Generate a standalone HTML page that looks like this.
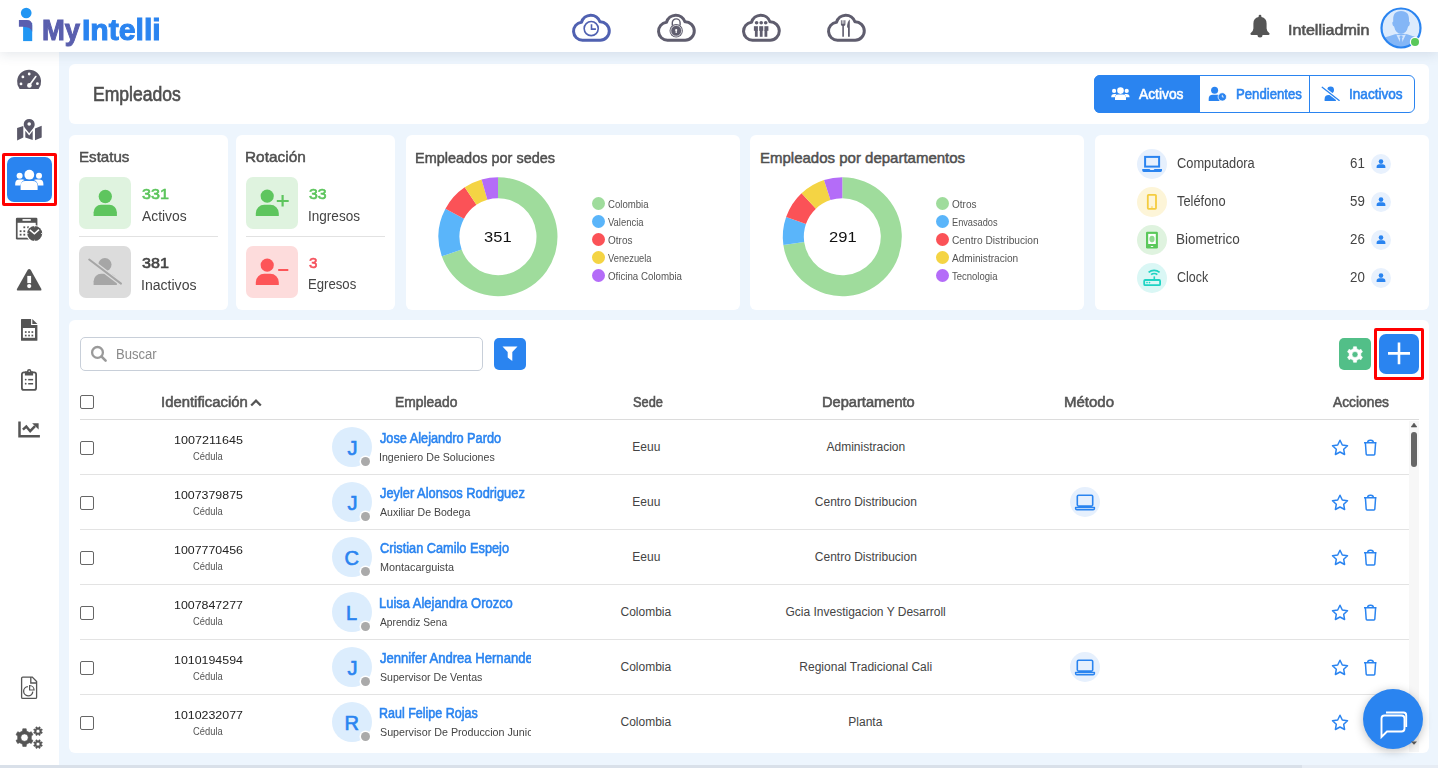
<!DOCTYPE html><html><head><meta charset="utf-8"><style>
html,body{margin:0;padding:0}
body{width:1438px;height:768px;overflow:hidden;position:relative;background:#edf5fd;font-family:"Liberation Sans", sans-serif}
.t{position:absolute;white-space:nowrap;transform-origin:0 0}
svg{display:block}
</style></head><body><div style="position:absolute;left:0px;top:0px;width:1438px;height:52px;background:#fff;box-shadow:0 2px 12px rgba(40,60,90,0.13);z-index:5"></div>
<div style="position:absolute;left:0px;top:52px;width:59px;height:716px;background:#fff;z-index:2"></div>
<div style="position:absolute;left:0px;top:765px;width:1302px;height:3px;background:#d9e0e9;z-index:6"></div>
<div style="position:absolute;left:1302px;top:765px;width:136px;height:3px;background:#e6ecf4;z-index:6"></div>
<div style="position:absolute;left:69px;top:64px;width:1360px;height:60px;background:#fff;border-radius:6px;"></div>
<div style="position:absolute;left:69px;top:135px;width:159px;height:175px;background:#fff;border-radius:6px;"></div>
<div style="position:absolute;left:236px;top:135px;width:159px;height:175px;background:#fff;border-radius:6px;"></div>
<div style="position:absolute;left:406px;top:135px;width:334px;height:175px;background:#fff;border-radius:6px;"></div>
<div style="position:absolute;left:750px;top:135px;width:334px;height:175px;background:#fff;border-radius:6px;"></div>
<div style="position:absolute;left:1095px;top:135px;width:334px;height:175px;background:#fff;border-radius:6px;"></div>
<div style="position:absolute;left:69px;top:320px;width:1360px;height:433px;background:#fff;border-radius:6px;"></div>
<div class="t" style="left: 92.52px; top: 84.07px; font-size: 20px; line-height: 20px; font-weight: 400; color: rgb(79, 79, 79); -webkit-text-stroke: 0.64px rgb(79, 79, 79); transform: scaleX(0.8773);">Empleados</div>
<div style="position:absolute;left:1094px;top:75px;width:321px;height:38px;box-sizing:border-box;border:1px solid #2a84f0;border-radius:6px;overflow:hidden"></div>
<div style="position:absolute;left:1094px;top:75px;width:106px;height:38px;background:#2a84f0;border-radius:6px 0 0 6px"></div>
<div style="position:absolute;left:1309px;top:75px;width:1px;height:38px;background:#2a84f0"></div>
<div class="t" style="left: 1139px; top: 85.8px; font-size: 15px; line-height: 15px; font-weight: 400; color: rgb(255, 255, 255); -webkit-text-stroke: 0.6px rgb(255, 255, 255); transform: scaleX(0.9196);">Activos</div>
<div class="t" style="left: 1235.62px; top: 85.8px; font-size: 15px; line-height: 15px; font-weight: 400; color: rgb(42, 132, 240); -webkit-text-stroke: 0.6px rgb(42, 132, 240); transform: scaleX(0.8769);">Pendientes</div>
<div class="t" style="left: 1348.79px; top: 85.8px; font-size: 15px; line-height: 15px; font-weight: 400; color: rgb(42, 132, 240); -webkit-text-stroke: 0.6px rgb(42, 132, 240); transform: scaleX(0.9065);">Inactivos</div>
<div class="t" style="left: 1287.83px; top: 22.4px; font-size: 15px; line-height: 15px; font-weight: 400; color: rgb(85, 85, 85); -webkit-text-stroke: 0.6px rgb(85, 85, 85); z-index: 7; transform: scaleX(1.0721);">Intelliadmin</div>
<div class="t" style="left: 78.59px; top: 149.2px; font-size: 15px; line-height: 15px; font-weight: 400; color: rgb(79, 79, 79); -webkit-text-stroke: 0.48px rgb(79, 79, 79); transform: scaleX(1.0077);">Estatus</div>
<div style="position:absolute;left:79px;top:177px;width:52px;height:52px;background:#dff3df;border-radius:7px"></div>
<div style="position:absolute;left:79px;top:246px;width:52px;height:52px;background:#dcdcdc;border-radius:7px"></div>
<div style="position:absolute;left:79px;top:236px;width:139px;height:1px;background:#e2e2e2"></div>
<div class="t" style="left: 141.7px; top: 185.9px; font-size: 15px; line-height: 15px; font-weight: 400; color: rgb(91, 196, 91); -webkit-text-stroke: 0.6px rgb(91, 196, 91); transform: scaleX(1.0735);">331</div>
<div class="t" style="left: 141.7px; top: 208.95px; font-size: 14px; line-height: 14px; font-weight: 400; color: rgb(68, 68, 68); transform: scaleX(0.9906);">Activos</div>
<div class="t" style="left: 141.7px; top: 255px; font-size: 15px; line-height: 15px; font-weight: 400; color: rgb(68, 68, 68); -webkit-text-stroke: 0.6px rgb(68, 68, 68); transform: scaleX(1.0735);">381</div>
<div class="t" style="left: 140.7px; top: 277.85px; font-size: 14px; line-height: 14px; font-weight: 400; color: rgb(68, 68, 68); transform: scaleX(1.0046);">Inactivos</div>
<div class="t" style="left: 245.47px; top: 149.2px; font-size: 15px; line-height: 15px; font-weight: 400; color: rgb(79, 79, 79); -webkit-text-stroke: 0.48px rgb(79, 79, 79); transform: scaleX(1.0266);">Rotación</div>
<div style="position:absolute;left:246px;top:177px;width:52px;height:52px;background:#dff3df;border-radius:7px"></div>
<div style="position:absolute;left:246px;top:246px;width:52px;height:52px;background:#fddcdc;border-radius:7px"></div>
<div style="position:absolute;left:246px;top:236px;width:139px;height:1px;background:#e2e2e2"></div>
<div class="t" style="left: 308.9px; top: 186.1px; font-size: 15px; line-height: 15px; font-weight: 400; color: rgb(91, 196, 91); -webkit-text-stroke: 0.6px rgb(91, 196, 91); transform: scaleX(1.0586);">33</div>
<div class="t" style="left: 307.93px; top: 208.75px; font-size: 14px; line-height: 14px; font-weight: 400; color: rgb(68, 68, 68); transform: scaleX(0.9678);">Ingresos</div>
<div class="t" style="left: 308.9px; top: 255.1px; font-size: 15px; line-height: 15px; font-weight: 400; color: rgb(245, 81, 92); -webkit-text-stroke: 0.6px rgb(245, 81, 92); transform: scaleX(1.0125);">3</div>
<div class="t" style="left: 307.96px; top: 277.45px; font-size: 14px; line-height: 14px; font-weight: 400; color: rgb(68, 68, 68); transform: scaleX(0.9393);">Egresos</div>
<svg style="position:absolute;left:0px;top:0px;pointer-events:none;z-index:1" width="1438" height="768" viewBox="0 0 1438 768"><path d="M498.00,177.20 A59.5,59.5 0 1 1 441.84,256.37 L461.66,249.42 A38.5,38.5 0 1 0 498.00,198.20 Z" fill="#9fdc9c"></path><path d="M441.84,256.37 A59.5,59.5 0 0 1 445.46,208.77 L464.01,218.63 A38.5,38.5 0 0 0 461.66,249.42 Z" fill="#5ab5fa"></path><path d="M445.46,208.77 A59.5,59.5 0 0 1 464.73,187.37 L476.47,204.78 A38.5,38.5 0 0 0 464.01,218.63 Z" fill="#fb5257"></path><path d="M464.73,187.37 A59.5,59.5 0 0 1 481.60,179.50 L487.39,199.69 A38.5,38.5 0 0 0 476.47,204.78 Z" fill="#f4d444"></path><path d="M481.60,179.50 A59.5,59.5 0 0 1 498.00,177.20 L498.00,198.20 A38.5,38.5 0 0 0 487.39,199.69 Z" fill="#b46cf8"></path></svg>
<svg style="position:absolute;left:0px;top:0px;pointer-events:none;z-index:1" width="1438" height="768" viewBox="0 0 1438 768"><path d="M842.30,177.20 A59.5,59.5 0 1 1 783.38,244.98 L804.17,242.06 A38.5,38.5 0 1 0 842.30,198.20 Z" fill="#9fdc9c"></path><path d="M783.38,244.98 A59.5,59.5 0 0 1 786.14,217.03 L805.96,223.98 A38.5,38.5 0 0 0 804.17,242.06 Z" fill="#5ab5fa"></path><path d="M786.14,217.03 A59.5,59.5 0 0 1 801.57,193.33 L815.94,208.63 A38.5,38.5 0 0 0 805.96,223.98 Z" fill="#fb5257"></path><path d="M801.57,193.33 A59.5,59.5 0 0 1 824.01,180.08 L830.47,200.06 A38.5,38.5 0 0 0 815.94,208.63 Z" fill="#f4d444"></path><path d="M824.01,180.08 A59.5,59.5 0 0 1 842.30,177.20 L842.30,198.20 A38.5,38.5 0 0 0 830.47,200.06 Z" fill="#b46cf8"></path></svg>
<div class="t" style="left: 484.4px; top: 228.9px; font-size: 15px; line-height: 15px; font-weight: 400; color: rgb(17, 17, 17); z-index: 2; transform: scaleX(1.1019);">351</div>
<div class="t" style="left: 828.7px; top: 228.9px; font-size: 15px; line-height: 15px; font-weight: 400; color: rgb(17, 17, 17); z-index: 2; transform: scaleX(1.1019);">291</div>
<div class="t" style="left: 415.43px; top: 149.7px; font-size: 15px; line-height: 15px; font-weight: 400; color: rgb(79, 79, 79); -webkit-text-stroke: 0.48px rgb(79, 79, 79); transform: scaleX(0.9653);">Empleados por sedes</div>
<div class="t" style="left: 760px; top: 149.7px; font-size: 15px; line-height: 15px; font-weight: 400; color: rgb(79, 79, 79); -webkit-text-stroke: 0.48px rgb(79, 79, 79);">Empleados por departamentos</div>
<div style="position:absolute;left:592.1px;top:196.9px;width:13px;height:13px;background:#9fdc9c;border-radius:50%"></div>
<div class="t" style="left: 607.7px; top: 198.69px; font-size: 11px; line-height: 11px; font-weight: 400; color: rgb(85, 85, 85); transform: scaleX(0.8723);">Colombia</div>
<div style="position:absolute;left:592.1px;top:214.9px;width:13px;height:13px;background:#5ab5fa;border-radius:50%"></div>
<div class="t" style="left: 607.7px; top: 216.69px; font-size: 11px; line-height: 11px; font-weight: 400; color: rgb(85, 85, 85); transform: scaleX(0.8589);">Valencia</div>
<div style="position:absolute;left:592.1px;top:232.9px;width:13px;height:13px;background:#fb5257;border-radius:50%"></div>
<div class="t" style="left: 607.7px; top: 234.69px; font-size: 11px; line-height: 11px; font-weight: 400; color: rgb(85, 85, 85); transform: scaleX(0.909);">Otros</div>
<div style="position:absolute;left:592.1px;top:250.89999999999998px;width:13px;height:13px;background:#f4d444;border-radius:50%"></div>
<div class="t" style="left: 607.7px; top: 252.69px; font-size: 11px; line-height: 11px; font-weight: 400; color: rgb(85, 85, 85); transform: scaleX(0.8476);">Venezuela</div>
<div style="position:absolute;left:592.1px;top:268.9px;width:13px;height:13px;background:#b46cf8;border-radius:50%"></div>
<div class="t" style="left: 607.7px; top: 270.69px; font-size: 11px; line-height: 11px; font-weight: 400; color: rgb(85, 85, 85); transform: scaleX(0.8838);">Oficina Colombia</div>
<div style="position:absolute;left:936.1px;top:196.9px;width:13px;height:13px;background:#9fdc9c;border-radius:50%"></div>
<div class="t" style="left: 951.7px; top: 198.69px; font-size: 11px; line-height: 11px; font-weight: 400; color: rgb(85, 85, 85); transform: scaleX(0.9126);">Otros</div>
<div style="position:absolute;left:936.1px;top:214.9px;width:13px;height:13px;background:#5ab5fa;border-radius:50%"></div>
<div class="t" style="left: 951.7px; top: 216.69px; font-size: 11px; line-height: 11px; font-weight: 400; color: rgb(85, 85, 85); transform: scaleX(0.8375);">Envasados</div>
<div style="position:absolute;left:936.1px;top:232.9px;width:13px;height:13px;background:#fb5257;border-radius:50%"></div>
<div class="t" style="left: 951.7px; top: 234.69px; font-size: 11px; line-height: 11px; font-weight: 400; color: rgb(85, 85, 85); transform: scaleX(0.927);">Centro Distribucion</div>
<div style="position:absolute;left:936.1px;top:250.89999999999998px;width:13px;height:13px;background:#f4d444;border-radius:50%"></div>
<div class="t" style="left: 951.7px; top: 252.69px; font-size: 11px; line-height: 11px; font-weight: 400; color: rgb(85, 85, 85); transform: scaleX(0.9178);">Administracion</div>
<div style="position:absolute;left:936.1px;top:268.9px;width:13px;height:13px;background:#b46cf8;border-radius:50%"></div>
<div class="t" style="left: 951.7px; top: 270.69px; font-size: 11px; line-height: 11px; font-weight: 400; color: rgb(85, 85, 85); transform: scaleX(0.8639);">Tecnologia</div>
<div style="position:absolute;left:1137px;top:148.8px;width:30px;height:30px;background:#e6f0fd;border-radius:50%"></div>
<div class="t" style="left: 1177.3px; top: 155.95px; font-size: 14px; line-height: 14px; font-weight: 400; color: rgb(68, 68, 68); transform: scaleX(0.916);">Computadora</div>
<div class="t" style="left: 1349.5px; top: 155.95px; font-size: 14px; line-height: 14px; font-weight: 400; color: rgb(68, 68, 68); transform: scaleX(0.9502);">61</div>
<div style="position:absolute;left:1371px;top:153.8px;width:20px;height:20px;background:#e8f1fd;border-radius:50%"></div>
<div style="position:absolute;left:1137px;top:186.8px;width:30px;height:30px;background:#fdf5d8;border-radius:50%"></div>
<div class="t" style="left: 1177.3px; top: 193.95px; font-size: 14px; line-height: 14px; font-weight: 400; color: rgb(68, 68, 68); transform: scaleX(0.9183);">Teléfono</div>
<div class="t" style="left: 1349.5px; top: 193.95px; font-size: 14px; line-height: 14px; font-weight: 400; color: rgb(68, 68, 68); transform: scaleX(0.9502);">59</div>
<div style="position:absolute;left:1371px;top:191.8px;width:20px;height:20px;background:#e8f1fd;border-radius:50%"></div>
<div style="position:absolute;left:1137px;top:224.8px;width:30px;height:30px;background:#dff3df;border-radius:50%"></div>
<div class="t" style="left: 1176.33px; top: 231.95px; font-size: 14px; line-height: 14px; font-weight: 400; color: rgb(68, 68, 68); transform: scaleX(0.9656);">Biometrico</div>
<div class="t" style="left: 1349.5px; top: 231.95px; font-size: 14px; line-height: 14px; font-weight: 400; color: rgb(68, 68, 68); transform: scaleX(0.9502);">26</div>
<div style="position:absolute;left:1371px;top:229.8px;width:20px;height:20px;background:#e8f1fd;border-radius:50%"></div>
<div style="position:absolute;left:1137px;top:262.8px;width:30px;height:30px;background:#daf7f5;border-radius:50%"></div>
<div class="t" style="left: 1177.3px; top: 269.95px; font-size: 14px; line-height: 14px; font-weight: 400; color: rgb(68, 68, 68); transform: scaleX(0.8887);">Clock</div>
<div class="t" style="left: 1349.5px; top: 269.95px; font-size: 14px; line-height: 14px; font-weight: 400; color: rgb(68, 68, 68); transform: scaleX(0.9502);">20</div>
<div style="position:absolute;left:1371px;top:267.8px;width:20px;height:20px;background:#e8f1fd;border-radius:50%"></div>
<div style="position:absolute;left:80px;top:337px;width:403px;height:34px;box-sizing:border-box;border:1px solid #c8cfd9;border-radius:5px"></div>
<div class="t" style="left: 116.47px; top: 347.35px; font-size: 14px; line-height: 14px; font-weight: 400; color: rgb(138, 138, 138); transform: scaleX(0.9345);">Buscar</div>
<div style="position:absolute;left:494px;top:338px;width:32px;height:32px;background:#2a84f0;border-radius:5px"></div>
<div style="position:absolute;left:1339px;top:338px;width:32px;height:32px;background:#52bf88;border-radius:5px"></div>
<div style="position:absolute;left:1374px;top:328px;width:50px;height:52px;box-sizing:border-box;border:3px solid #ff0000;border-radius:2px"></div>
<div style="position:absolute;left:1379px;top:334px;width:40px;height:40px;background:#2a84f0;border-radius:7px"></div>
<div style="position:absolute;left:80px;top:395px;width:14px;height:14px;box-sizing:border-box;border:1.3px solid #666;border-radius:2px"></div>
<div class="t" style="left: 161.14px; top: 394.95px; font-size: 14px; line-height: 14px; font-weight: 400; color: rgb(85, 85, 85); -webkit-text-stroke: 0.56px rgb(85, 85, 85); transform: scaleX(1.0622);">Identificación</div>
<div class="t" style="left: 394.91px; top: 394.85px; font-size: 14px; line-height: 14px; font-weight: 400; color: rgb(85, 85, 85); -webkit-text-stroke: 0.56px rgb(85, 85, 85); transform: scaleX(0.9895);">Empleado</div>
<div class="t" style="left: 632.5px; top: 394.95px; font-size: 14px; line-height: 14px; font-weight: 400; color: rgb(85, 85, 85); -webkit-text-stroke: 0.56px rgb(85, 85, 85); transform: scaleX(0.9146);">Sede</div>
<div class="t" style="left: 821.75px; top: 394.95px; font-size: 14px; line-height: 14px; font-weight: 400; color: rgb(85, 85, 85); -webkit-text-stroke: 0.56px rgb(85, 85, 85); transform: scaleX(1.0451);">Departamento</div>
<div class="t" style="left: 1064.33px; top: 394.95px; font-size: 14px; line-height: 14px; font-weight: 400; color: rgb(85, 85, 85); -webkit-text-stroke: 0.56px rgb(85, 85, 85); transform: scaleX(1.0717);">Método</div>
<div class="t" style="left: 1332.5px; top: 394.85px; font-size: 14px; line-height: 14px; font-weight: 400; color: rgb(85, 85, 85); -webkit-text-stroke: 0.56px rgb(85, 85, 85); transform: scaleX(0.9858);">Acciones</div>
<div style="position:absolute;left:80px;top:419px;width:1339px;height:1.3px;background:#dcdcdc"></div>
<div style="position:absolute;left:80px;top:441px;width:14px;height:14px;box-sizing:border-box;border:1.3px solid #666;border-radius:2px"></div>
<div class="t" style="left: 173.65px; top: 434.52px; font-size: 11.2px; line-height: 11.2px; font-weight: 400; color: rgb(34, 34, 34); transform: scaleX(1.1232);">1007211645</div>
<div class="t" style="left: 192.95px; top: 451.54px; font-size: 10px; line-height: 10px; font-weight: 400; color: rgb(85, 85, 85); transform: scaleX(0.9369);">Cédula</div>
<div style="position:absolute;left:332px;top:427px;width:40px;height:40px;background:#dcedfd;border-radius:50%"></div>
<div class="t" style="left: 347.5px; top: 438.07px; font-size: 20px; line-height: 20px; font-weight: 400; color: rgb(42, 132, 240); -webkit-text-stroke: 0.64px rgb(42, 132, 240);">J</div>
<div style="position:absolute;left:361px;top:456.5px;width:9px;height:9px;background:#aaa;border-radius:50%;box-shadow:0 0 0 1.5px #fff"></div>
<div style="position:absolute;left:0;top:0;width:531px;height:768px;overflow:hidden">
<div class="t" style="left: 380px; top: 431.15px; font-size: 14px; line-height: 14px; font-weight: 400; color: rgb(42, 132, 240); -webkit-text-stroke: 0.56px rgb(42, 132, 240); transform: scaleX(0.9099);">Jose Alejandro Pardo</div>
<div class="t" style="left: 379.03px; top: 451.59px; font-size: 11px; line-height: 11px; font-weight: 400; color: rgb(68, 68, 68); transform: scaleX(0.9652);">Ingeniero De Soluciones</div>
</div>
<div class="t" style="left: 632.32px; top: 441.24px; font-size: 12px; line-height: 12px; font-weight: 400; color: rgb(68, 68, 68);">Eeuu</div>
<div class="t" style="left: 826.49px; top: 441.24px; font-size: 12px; line-height: 12px; font-weight: 400; color: rgb(68, 68, 68);">Administracion</div>
<div style="position:absolute;left:80px;top:474px;width:1329px;height:1px;background:#e3e3e3"></div>
<div style="position:absolute;left:80px;top:496px;width:14px;height:14px;box-sizing:border-box;border:1.3px solid #666;border-radius:2px"></div>
<div class="t" style="left: 173.65px; top: 489.52px; font-size: 11.2px; line-height: 11.2px; font-weight: 400; color: rgb(34, 34, 34); transform: scaleX(1.1081);">1007379875</div>
<div class="t" style="left: 192.95px; top: 506.54px; font-size: 10px; line-height: 10px; font-weight: 400; color: rgb(85, 85, 85); transform: scaleX(0.9369);">Cédula</div>
<div style="position:absolute;left:332px;top:482px;width:40px;height:40px;background:#dcedfd;border-radius:50%"></div>
<div class="t" style="left: 347.5px; top: 493.07px; font-size: 20px; line-height: 20px; font-weight: 400; color: rgb(42, 132, 240); -webkit-text-stroke: 0.64px rgb(42, 132, 240);">J</div>
<div style="position:absolute;left:361px;top:511.5px;width:9px;height:9px;background:#aaa;border-radius:50%;box-shadow:0 0 0 1.5px #fff"></div>
<div style="position:absolute;left:0;top:0;width:531px;height:768px;overflow:hidden">
<div class="t" style="left: 380px; top: 486.15px; font-size: 14px; line-height: 14px; font-weight: 400; color: rgb(42, 132, 240); -webkit-text-stroke: 0.56px rgb(42, 132, 240); transform: scaleX(0.9166);">Jeyler Alonsos Rodriguez</div>
<div class="t" style="left: 380px; top: 506.59px; font-size: 11px; line-height: 11px; font-weight: 400; color: rgb(68, 68, 68); transform: scaleX(0.9595);">Auxiliar De Bodega</div>
</div>
<div class="t" style="left: 632.32px; top: 496.24px; font-size: 12px; line-height: 12px; font-weight: 400; color: rgb(68, 68, 68);">Eeuu</div>
<div class="t" style="left: 814.82px; top: 496.24px; font-size: 12px; line-height: 12px; font-weight: 400; color: rgb(68, 68, 68);">Centro Distribucion</div>
<div style="position:absolute;left:80px;top:529px;width:1329px;height:1px;background:#e3e3e3"></div>
<div style="position:absolute;left:1070px;top:486.5px;width:30px;height:30px;background:#e6f0fd;border-radius:50%"></div>
<div style="position:absolute;left:80px;top:551px;width:14px;height:14px;box-sizing:border-box;border:1.3px solid #666;border-radius:2px"></div>
<div class="t" style="left: 173.65px; top: 544.52px; font-size: 11.2px; line-height: 11.2px; font-weight: 400; color: rgb(34, 34, 34); transform: scaleX(1.1081);">1007770456</div>
<div class="t" style="left: 192.95px; top: 561.53px; font-size: 10px; line-height: 10px; font-weight: 400; color: rgb(85, 85, 85); transform: scaleX(0.9369);">Cédula</div>
<div style="position:absolute;left:332px;top:537px;width:40px;height:40px;background:#dcedfd;border-radius:50%"></div>
<div class="t" style="left: 344.5px; top: 548.07px; font-size: 20px; line-height: 20px; font-weight: 400; color: rgb(42, 132, 240); -webkit-text-stroke: 0.64px rgb(42, 132, 240);">C</div>
<div style="position:absolute;left:361px;top:566.5px;width:9px;height:9px;background:#aaa;border-radius:50%;box-shadow:0 0 0 1.5px #fff"></div>
<div style="position:absolute;left:0;top:0;width:531px;height:768px;overflow:hidden">
<div class="t" style="left: 380px; top: 541.15px; font-size: 14px; line-height: 14px; font-weight: 400; color: rgb(42, 132, 240); -webkit-text-stroke: 0.56px rgb(42, 132, 240); transform: scaleX(0.911);">Cristian Camilo Espejo</div>
<div class="t" style="left: 380px; top: 561.59px; font-size: 11px; line-height: 11px; font-weight: 400; color: rgb(68, 68, 68); transform: scaleX(0.9844);">Montacarguista</div>
</div>
<div class="t" style="left: 632.32px; top: 551.24px; font-size: 12px; line-height: 12px; font-weight: 400; color: rgb(68, 68, 68);">Eeuu</div>
<div class="t" style="left: 814.82px; top: 551.24px; font-size: 12px; line-height: 12px; font-weight: 400; color: rgb(68, 68, 68);">Centro Distribucion</div>
<div style="position:absolute;left:80px;top:584px;width:1329px;height:1px;background:#e3e3e3"></div>
<div style="position:absolute;left:80px;top:606px;width:14px;height:14px;box-sizing:border-box;border:1.3px solid #666;border-radius:2px"></div>
<div class="t" style="left: 173.65px; top: 599.52px; font-size: 11.2px; line-height: 11.2px; font-weight: 400; color: rgb(34, 34, 34); transform: scaleX(1.1081);">1007847277</div>
<div class="t" style="left: 192.95px; top: 616.53px; font-size: 10px; line-height: 10px; font-weight: 400; color: rgb(85, 85, 85); transform: scaleX(0.9369);">Cédula</div>
<div style="position:absolute;left:332px;top:592px;width:40px;height:40px;background:#dcedfd;border-radius:50%"></div>
<div class="t" style="left: 346px; top: 603.07px; font-size: 20px; line-height: 20px; font-weight: 400; color: rgb(42, 132, 240); -webkit-text-stroke: 0.64px rgb(42, 132, 240);">L</div>
<div style="position:absolute;left:361px;top:621.5px;width:9px;height:9px;background:#aaa;border-radius:50%;box-shadow:0 0 0 1.5px #fff"></div>
<div style="position:absolute;left:0;top:0;width:531px;height:768px;overflow:hidden">
<div class="t" style="left: 379.08px; top: 596.15px; font-size: 14px; line-height: 14px; font-weight: 400; color: rgb(42, 132, 240); -webkit-text-stroke: 0.56px rgb(42, 132, 240); transform: scaleX(0.9244);">Luisa Alejandra Orozco</div>
<div class="t" style="left: 380px; top: 616.59px; font-size: 11px; line-height: 11px; font-weight: 400; color: rgb(68, 68, 68); transform: scaleX(0.9296);">Aprendiz Sena</div>
</div>
<div class="t" style="left: 620.49px; top: 606.24px; font-size: 12px; line-height: 12px; font-weight: 400; color: rgb(68, 68, 68);">Colombia</div>
<div class="t" style="left: 785.47px; top: 606.24px; font-size: 12px; line-height: 12px; font-weight: 400; color: rgb(68, 68, 68);">Gcia Investigacion Y Desarroll</div>
<div style="position:absolute;left:80px;top:639px;width:1329px;height:1px;background:#e3e3e3"></div>
<div style="position:absolute;left:80px;top:661px;width:14px;height:14px;box-sizing:border-box;border:1.3px solid #666;border-radius:2px"></div>
<div class="t" style="left: 173.65px; top: 654.52px; font-size: 11.2px; line-height: 11.2px; font-weight: 400; color: rgb(34, 34, 34); transform: scaleX(1.1081);">1010194594</div>
<div class="t" style="left: 192.95px; top: 671.53px; font-size: 10px; line-height: 10px; font-weight: 400; color: rgb(85, 85, 85); transform: scaleX(0.9369);">Cédula</div>
<div style="position:absolute;left:332px;top:647px;width:40px;height:40px;background:#dcedfd;border-radius:50%"></div>
<div class="t" style="left: 347.5px; top: 658.07px; font-size: 20px; line-height: 20px; font-weight: 400; color: rgb(42, 132, 240); -webkit-text-stroke: 0.64px rgb(42, 132, 240);">J</div>
<div style="position:absolute;left:361px;top:676.5px;width:9px;height:9px;background:#aaa;border-radius:50%;box-shadow:0 0 0 1.5px #fff"></div>
<div style="position:absolute;left:0;top:0;width:531px;height:768px;overflow:hidden">
<div class="t" style="left: 380px; top: 651.15px; font-size: 14px; line-height: 14px; font-weight: 400; color: rgb(42, 132, 240); -webkit-text-stroke: 0.56px rgb(42, 132, 240); transform: scaleX(0.9345);">Jennifer Andrea Hernandez</div>
<div class="t" style="left: 380px; top: 671.59px; font-size: 11px; line-height: 11px; font-weight: 400; color: rgb(68, 68, 68); transform: scaleX(0.9617);">Supervisor De Ventas</div>
</div>
<div class="t" style="left: 620.49px; top: 661.24px; font-size: 12px; line-height: 12px; font-weight: 400; color: rgb(68, 68, 68);">Colombia</div>
<div class="t" style="left: 799.36px; top: 661.24px; font-size: 12px; line-height: 12px; font-weight: 400; color: rgb(68, 68, 68);">Regional Tradicional Cali</div>
<div style="position:absolute;left:80px;top:694px;width:1329px;height:1px;background:#e3e3e3"></div>
<div style="position:absolute;left:1070px;top:651.5px;width:30px;height:30px;background:#e6f0fd;border-radius:50%"></div>
<div style="position:absolute;left:80px;top:716px;width:14px;height:14px;box-sizing:border-box;border:1.3px solid #666;border-radius:2px"></div>
<div class="t" style="left: 173.65px; top: 709.52px; font-size: 11.2px; line-height: 11.2px; font-weight: 400; color: rgb(34, 34, 34); transform: scaleX(1.1081);">1010232077</div>
<div class="t" style="left: 192.95px; top: 726.53px; font-size: 10px; line-height: 10px; font-weight: 400; color: rgb(85, 85, 85); transform: scaleX(0.9369);">Cédula</div>
<div style="position:absolute;left:332px;top:702px;width:40px;height:40px;background:#dcedfd;border-radius:50%"></div>
<div class="t" style="left: 344.5px; top: 713.07px; font-size: 20px; line-height: 20px; font-weight: 400; color: rgb(42, 132, 240); -webkit-text-stroke: 0.64px rgb(42, 132, 240);">R</div>
<div style="position:absolute;left:361px;top:731.5px;width:9px;height:9px;background:#aaa;border-radius:50%;box-shadow:0 0 0 1.5px #fff"></div>
<div style="position:absolute;left:0;top:0;width:531px;height:768px;overflow:hidden">
<div class="t" style="left: 379.11px; top: 706.15px; font-size: 14px; line-height: 14px; font-weight: 400; color: rgb(42, 132, 240); -webkit-text-stroke: 0.56px rgb(42, 132, 240); transform: scaleX(0.8932);">Raul Felipe Rojas</div>
<div class="t" style="left: 380px; top: 726.59px; font-size: 11px; line-height: 11px; font-weight: 400; color: rgb(68, 68, 68); transform: scaleX(0.9743);">Supervisor De Produccion Junior</div>
</div>
<div class="t" style="left: 620.49px; top: 716.24px; font-size: 12px; line-height: 12px; font-weight: 400; color: rgb(68, 68, 68);">Colombia</div>
<div class="t" style="left: 848.32px; top: 716.24px; font-size: 12px; line-height: 12px; font-weight: 400; color: rgb(68, 68, 68);">Planta</div>
<div style="position:absolute;left:1409px;top:421px;width:10px;height:331px;background:#f7f7f7"></div>
<div style="position:absolute;left:1411px;top:432px;width:6px;height:35px;background:#666;border-radius:3px"></div>
<div style="position:absolute;left:1363px;top:689px;width:60px;height:60px;background:#2a84f0;border-radius:50%;box-shadow:0 2px 10px rgba(0,0,0,0.25);z-index:8"></div>
<div style="position:absolute;left:2px;top:153px;width:55px;height:53px;box-sizing:border-box;border:3px solid #ff0000;border-radius:2px;z-index:3"></div>
<div style="position:absolute;left:7px;top:157px;width:45px;height:45px;background:#2a84f0;border-radius:7px;z-index:3"></div>
<svg style="position:absolute;left:570px;top:10px;z-index:7" width="44" height="34" viewBox="0 0 44 34"><path d="M12.5 30.2A9 9 0 0 1 11.5 12.26A9.66 9.66 0 0 1 29.96 11.8A9.2 9.2 0 1 1 30.2 30.2Z" fill="none" stroke="#5061b1" stroke-width="3" stroke-linejoin="round"></path><circle cx="21.2" cy="18.6" r="7.05" fill="none" stroke="#5061b1" stroke-width="1.6"></circle><path d="M21.5 14.3V19.1H25.9" fill="none" stroke="#5061b1" stroke-width="1.6"></path></svg>
<svg style="position:absolute;left:655px;top:10px;z-index:7" width="44" height="34" viewBox="0 0 44 34"><path d="M12.5 30.2A9 9 0 0 1 11.5 12.26A9.66 9.66 0 0 1 29.96 11.8A9.2 9.2 0 1 1 30.2 30.2Z" fill="none" stroke="#5f5d6e" stroke-width="3" stroke-linejoin="round"></path><path d="M17.3 15.5V12.8a3.9 3.9 0 0 1 7.8 0V15.5" fill="none" stroke="#5f5d6e" stroke-width="1.4"></path><circle cx="21.2" cy="20.8" r="6.7" fill="#5f5d6e"></circle><circle cx="21.2" cy="20.8" r="5.4" fill="none" stroke="#fff" stroke-width="0.7"></circle><circle cx="21.2" cy="20" r="1.1" fill="#fff"></circle><rect x="20.6" y="20" width="1.2" height="3" fill="#fff"></rect></svg>
<svg style="position:absolute;left:740px;top:10px;z-index:7" width="44" height="34" viewBox="0 0 44 34"><path d="M12.5 30.2A9 9 0 0 1 11.5 12.26A9.66 9.66 0 0 1 29.96 11.8A9.2 9.2 0 1 1 30.2 30.2Z" fill="none" stroke="#5f5d6e" stroke-width="3" stroke-linejoin="round"></path><g fill="#5f5d6e"><circle cx="16.6" cy="12.8" r="1.8"></circle><circle cx="21.2" cy="12.8" r="1.8"></circle><circle cx="25.7" cy="12.8" r="1.8"></circle><rect x="13.9" y="16.2" width="4" height="4.6"></rect><rect x="19.2" y="16.2" width="4" height="4.6"></rect><rect x="24.4" y="16.2" width="4" height="4.6"></rect><rect x="14.9" y="20" width="2.8" height="6.8"></rect><rect x="19.8" y="20" width="2.8" height="6.8"></rect><rect x="24.5" y="20" width="2.8" height="6.8"></rect></g></svg>
<svg style="position:absolute;left:825px;top:10px;z-index:7" width="44" height="34" viewBox="0 0 44 34"><path d="M12.5 30.2A9 9 0 0 1 11.5 12.26A9.66 9.66 0 0 1 29.96 11.8A9.2 9.2 0 1 1 30.2 30.2Z" fill="none" stroke="#5f5d6e" stroke-width="3" stroke-linejoin="round"></path><g fill="#5f5d6e"><path d="M15.9 10.2h0.9v3.5h0.8v-3.5h0.9v3.5h0.8v-3.5h1.1v4.3q0 1.3-1.5 1.6v10.7h-1.6v-10.7q-1.4-0.3-1.4-1.6z"></path><path d="M24.8 9.5v17.3h-1.8v-8.8l-0.9-0.8q0-5.5 2.7-7.7z"></path></g></svg>
<svg style="position:absolute;left:1249px;top:14px;z-index:7" width="22" height="24" viewBox="0 0 22 24"><path d="M11 0.8a1.4 1.4 0 0 1 1.4 1.4v0.9a6.6 6.6 0 0 1 5.2 6.5v4.8q0 2.2 2.6 4.6 0.6 0.6 0.3 1.3-0.3 0.6-1 0.6H2.5q-0.7 0-1-0.6-0.3-0.7 0.3-1.3 2.6-2.4 2.6-4.6V9.6a6.6 6.6 0 0 1 5.2-6.5V2.2A1.4 1.4 0 0 1 11 0.8zM8.5 21h5a2.5 2.5 0 0 1-5 0z" fill="#555"></path></svg>
<svg style="position:absolute;left:1380px;top:7px;z-index:7" width="42" height="42" viewBox="0 0 42 42"><defs><clipPath id="avc"><circle cx="21" cy="21" r="19"></circle></clipPath></defs><circle cx="21" cy="21" r="19.5" fill="#dcebfd"></circle><g clip-path="url(#avc)"><path d="M21.1 3.9C27 3.9 29 7.5 29 12L29 14.5Q30.2 14.8 29.8 17L29.3 18.5Q28.8 19.5 28.2 19.2Q26.5 26.7 21.1 26.7Q15.7 26.7 14 19.2Q13.4 19.5 12.9 18.5L12.4 17Q12 14.8 13.2 14.5L13.2 12C13.2 7.5 15.2 3.9 21.1 3.9Z" fill="#84b6f6"></path><path d="M0 44V32Q8 29.5 15 27.2L21.1 26.5 27.2 27.2Q34 29.5 42 32V44Z" fill="#84b6f6"></path><path d="M16.3 27.4L21.1 37.5 25.9 27.4Q21.1 28.6 16.3 27.4Z" fill="#d3e5fc"></path><path d="M19.9 28.6H22.3L22.8 30.4 22 31.3 22.8 37 21.1 38.5 19.4 37 20.2 31.3 19.4 30.4Z" fill="#84b6f6"></path></g><circle cx="21" cy="21" r="19.5" fill="none" stroke="#2a84f0" stroke-width="2.2"></circle><circle cx="35" cy="35" r="5.2" fill="#fff"></circle><circle cx="35" cy="35" r="4" fill="#5ac85a"></circle></svg>
<svg style="position:absolute;left:17px;top:6px;z-index:7" width="18" height="37" viewBox="0 0 18 37"><circle cx="9.2" cy="7" r="5.35" fill="#2196f3"></circle><rect x="6.1" y="17" width="9.1" height="18.1" fill="#2196f3"></rect><path d="M1.9 14H10Q15.2 14 15.2 19.5V25.8Q13.8 21 6.1 20.8H1.9Z" fill="#5a5fae"></path></svg>
<div class="t" style="left: 42.06px; top: 16.45px; font-size: 29px; line-height: 29px; font-weight: 700; color: rgb(90, 95, 174); -webkit-text-stroke: 1.02px rgb(90, 95, 174); z-index: 7; transform: scaleX(0.9449);">My</div>
<div class="t" style="left: 82.46px; top: 16.45px; font-size: 29px; line-height: 29px; font-weight: 700; color: rgb(42, 132, 240); -webkit-text-stroke: 1.02px rgb(42, 132, 240); z-index: 7; transform: scaleX(1.0389);">Intelli</div>
<svg style="position:absolute;left:12px;top:64px;z-index:4" width="34" height="30" viewBox="0 0 34 30"><path d="M7.6 25A12 12 0 1 1 26.6 25z" fill="#5a5868"></path><g fill="#fff"><circle cx="10.9" cy="12.9" r="1.4"></circle><circle cx="17.2" cy="10" r="1.4"></circle><circle cx="9" cy="19.9" r="1.4"></circle><circle cx="25.4" cy="19.7" r="1.4"></circle><circle cx="17.4" cy="21.4" r="2.3"></circle></g><path d="M17.4 21.2L23.8 12.5" stroke="#fff" stroke-width="1.6" stroke-linecap="round"></path></svg>
<svg style="position:absolute;left:12px;top:114px;z-index:4" width="34" height="30" viewBox="0 0 34 30"><g fill="#5a5868"><path d="M5.1 14L11.3 12.1V23.4L5.1 26.6z"></path><path d="M23 14.5L29.7 11.7V23.4L23 26.2z"></path><path d="M13.3 16.8L17.2 21.5 20.7 16.8V26L13.3 23.4z"></path><path d="M17.2 19.3l-4.4-5.6a5.5 5.5 0 1 1 8.8 0z"></path></g><circle cx="17.2" cy="10" r="1.8" fill="#fff"></circle></svg>
<svg style="position:absolute;left:7px;top:157px;z-index:4" width="45" height="45" viewBox="0 0 45 45"><g fill="#fff"><circle cx="22.3" cy="17.7" r="4.9"></circle><circle cx="12.6" cy="18.8" r="3"></circle><circle cx="32" cy="18.8" r="3"></circle><path d="M13.6 33V28.8q0-4.8 4.8-4.8h7.4q4.8 0 4.8 4.8V33z"></path><path d="M8.2 28.5v-1.6q0-4.3 4.3-4.3h3.3q1.2 0 1.9 0.5-3.6 1.2-4.2 5.4z"></path><path d="M36.4 28.5v-1.6q0-4.3-4.3-4.3h-3.3q-1.2 0-1.9 0.5 3.6 1.2 4.2 5.4z"></path></g></svg>
<svg style="position:absolute;left:12px;top:214px;z-index:4" width="34" height="30" viewBox="0 0 34 30"><rect x="3.9" y="3.7" width="21.5" height="21.7" rx="1.2" fill="#555555"></rect><rect x="5.6" y="8.8" width="18.1" height="14.9" fill="#fff"></rect><rect x="10.5" y="5.1" width="8.3" height="1.7" fill="#fff"></rect><g fill="#555555"><rect x="7.7" y="16.3" width="1.8" height="1.8"></rect><rect x="11.4" y="12.4" width="1.8" height="1.8"></rect><rect x="11.4" y="16.3" width="1.8" height="1.8"></rect><rect x="7.7" y="19.8" width="1.8" height="1.8"></rect><rect x="11.4" y="19.8" width="1.8" height="1.8"></rect><rect x="15.2" y="12.4" width="1.8" height="1.8"></rect></g><circle cx="22.7" cy="19.5" r="8.6" fill="#fff"></circle><circle cx="22.7" cy="19.5" r="7.5" fill="#555555"></circle><path d="M17.8 15.9L22.4 19.8 27 15.6" fill="none" stroke="#fff" stroke-width="1.5"></path><g stroke="#fff" stroke-width="0.8"><path d="M22.7 12v1.2M22.7 25.8v1.2M15.2 19.5h1.2M29 19.5h1.2"></path></g></svg>
<svg style="position:absolute;left:12px;top:264px;z-index:4" width="34" height="30" viewBox="0 0 34 30"><path d="M15.6 6.1q1.6-2.4 3.2 0l10.3 18.3q1.2 2.2-1.3 2.2H6.5q-2.5 0-1.3-2.2z" fill="#555555"></path><rect x="15.3" y="11.9" width="3.8" height="7.2" fill="#fff"></rect><circle cx="17.2" cy="22.1" r="2.1" fill="#fff"></circle></svg>
<svg style="position:absolute;left:12px;top:314px;z-index:4" width="34" height="30" viewBox="0 0 34 30"><path d="M9 5.5q0-0.6 0.6-0.6H19.1V11.1H25.4V26.2q0 0.6-0.6 0.6H9.6q-0.6 0-0.6-0.6z" fill="#555555"></path><path d="M20.3 4.9L25.4 9.9H20.3z" fill="#555555"></path><rect x="10.9" y="14" width="12.1" height="9.8" fill="#fff"></rect><g fill="#555555"><rect x="12.9" y="17.2" width="1.7" height="1.7"></rect><rect x="16.2" y="17.2" width="1.7" height="1.7"></rect><rect x="19.5" y="17.2" width="1.7" height="1.7"></rect><rect x="12.9" y="20.7" width="1.7" height="1.7"></rect><rect x="16.2" y="20.7" width="1.7" height="1.7"></rect><rect x="19.5" y="20.7" width="1.7" height="1.7"></rect></g></svg>
<svg style="position:absolute;left:12px;top:364px;z-index:4" width="34" height="30" viewBox="0 0 34 30"><rect x="9.9" y="8.3" width="14.2" height="17.6" rx="2" fill="none" stroke="#555555" stroke-width="1.8"></rect><path d="M12.9 7.4H21.1V11.5H12.9z" fill="#555555"></path><circle cx="17.2" cy="7.2" r="2.2" fill="#555555"></circle><circle cx="17.2" cy="7.2" r="0.7" fill="#fff"></circle><g fill="#555555"><circle cx="13.7" cy="15.6" r="0.9"></circle><circle cx="13.7" cy="19.7" r="0.9"></circle><rect x="16.2" y="14.9" width="4.9" height="1.5"></rect><rect x="16.2" y="19" width="4.9" height="1.5"></rect></g></svg>
<svg style="position:absolute;left:12px;top:414px;z-index:4" width="34" height="30" viewBox="0 0 34 30"><path d="M7.5 7.4V22.3H27.9" fill="none" stroke="#555555" stroke-width="2.5"></path><path d="M10.9 15.6L14.3 12.5 18.2 17.2 23 12.2" fill="none" stroke="#555555" stroke-width="2.5"></path><path d="M20.1 9.2H26.6V15.4z" fill="#555555"></path></svg>
<svg style="position:absolute;left:12px;top:673px;z-index:4" width="34" height="30" viewBox="0 0 34 30"><path d="M10.8 4.1H20.3L24.6 8.6V24.2q0 1.2-1.2 1.2H10.8q-1.2 0-1.2-1.2V5.3q0-1.2 1.2-1.2z" fill="none" stroke="#555555" stroke-width="1.3"></path><path d="M18.8 4.1V10H24.6" fill="none" stroke="#555555" stroke-width="1.3"></path><path d="M15.9 13.6a4.6 4.6 0 1 0 4.9 5" fill="none" stroke="#555555" stroke-width="1.3"></path><path d="M17.6 12.5a4.6 4.6 0 0 1 4.5 4.5H17.6z" fill="none" stroke="#555555" stroke-width="1.2"></path></svg>
<svg style="position:absolute;left:12px;top:722px;z-index:4" width="34" height="30" viewBox="0 0 34 30"><path d="M10.48 8.90 L10.81 6.76 L14.19 6.76 L14.52 8.90 L17.29 10.50 L19.31 9.72 L21.00 12.64 L19.32 14.00 L19.32 17.20 L21.00 18.56 L19.31 21.48 L17.29 20.70 L14.52 22.30 L14.19 24.44 L10.81 24.44 L10.48 22.30 L7.71 20.70 L5.69 21.48 L4.00 18.56 L5.68 17.20 L5.68 14.00 L4.00 12.64 L5.69 9.72 L7.71 10.50Z M16.20 15.60 A3.7 3.7 0 1 0 8.80 15.60 A3.7 3.7 0 1 0 16.20 15.60Z" fill="#555555" fill-rule="evenodd" stroke="#555555" stroke-width="0.6" stroke-linejoin="round"></path><path d="M26.58 5.85 L27.12 4.84 L28.29 5.33 L27.96 6.42 L28.78 7.24 L29.87 6.91 L30.36 8.08 L29.35 8.62 L29.35 9.78 L30.36 10.32 L29.87 11.49 L28.78 11.16 L27.96 11.98 L28.29 13.07 L27.12 13.56 L26.58 12.55 L25.42 12.55 L24.88 13.56 L23.71 13.07 L24.04 11.98 L23.22 11.16 L22.13 11.49 L21.64 10.32 L22.65 9.78 L22.65 8.62 L21.64 8.08 L22.13 6.91 L23.22 7.24 L24.04 6.42 L23.71 5.33 L24.88 4.84 L25.42 5.85Z M27.90 9.20 A1.9 1.9 0 1 0 24.10 9.20 A1.9 1.9 0 1 0 27.90 9.20Z" fill="#555555" fill-rule="evenodd" stroke="#555555" stroke-width="0.6" stroke-linejoin="round"></path><path d="M26.58 18.75 L27.12 17.74 L28.29 18.23 L27.96 19.32 L28.78 20.14 L29.87 19.81 L30.36 20.98 L29.35 21.52 L29.35 22.68 L30.36 23.22 L29.87 24.39 L28.78 24.06 L27.96 24.88 L28.29 25.97 L27.12 26.46 L26.58 25.45 L25.42 25.45 L24.88 26.46 L23.71 25.97 L24.04 24.88 L23.22 24.06 L22.13 24.39 L21.64 23.22 L22.65 22.68 L22.65 21.52 L21.64 20.98 L22.13 19.81 L23.22 20.14 L24.04 19.32 L23.71 18.23 L24.88 17.74 L25.42 18.75Z M27.90 22.10 A1.9 1.9 0 1 0 24.10 22.10 A1.9 1.9 0 1 0 27.90 22.10Z" fill="#555555" fill-rule="evenodd" stroke="#555555" stroke-width="0.6" stroke-linejoin="round"></path></svg>
<svg style="position:absolute;left:1105px;top:80px;" width="28" height="28" viewBox="0 0 28 28"><g fill="#fff"><circle cx="15.5" cy="10.6" r="3.3"></circle><circle cx="9.1" cy="10.9" r="2.1"></circle><circle cx="21.7" cy="10.9" r="2.1"></circle><path d="M10 19.9v-2.3q0-3 3-3h5q3 0 3 3v2.3z"></path><path d="M6.2 17.2q0-3.3 3.2-3.3h2.2q-1.6 0.9-1.8 3.3z"></path><path d="M24.6 17.2q0-3.3-3.2-3.3h-2.2q1.6 0.9 1.8 3.3z"></path></g></svg>
<svg style="position:absolute;left:1204px;top:80px;" width="28" height="28" viewBox="0 0 28 28"><g fill="#2a84f0"><circle cx="10.6" cy="10.2" r="3.5"></circle><path d="M4.7 21v-2.2q0-4 4-4h5q1.2 0 1.8 0.4V21z"></path><circle cx="18.3" cy="16.9" r="4.2" stroke="#fff" stroke-width="0.8"></circle></g><path d="M18.3 14.9v2.1h1.5" fill="none" stroke="#fff" stroke-width="0.8"></path></svg>
<svg style="position:absolute;left:1318px;top:80px;" width="28" height="28" viewBox="0 0 28 28"><defs><mask id="m1"><rect width="28" height="28" fill="#fff"></rect><path d="M4.2 7.3L21.2 20.4" stroke="#000" stroke-width="3.4"></path></mask></defs><g fill="#2a84f0" mask="url(#m1)"><circle cx="12.6" cy="10" r="3.4"></circle><path d="M6.6 21v-1.8q0-4.2 4.2-4.2h3.6q3.5 0 3.5 4.2V21z"></path></g><path d="M4.2 7.3L21.2 20.4" stroke="#2a84f0" stroke-width="1.3" stroke-linecap="round"></path></svg>
<svg style="position:absolute;left:79px;top:177px;" width="52" height="52" viewBox="0 0 52 52"><circle cx="26.3" cy="19.5" r="6.65" fill="#5ec55e"></circle><path d="M14.6 39.1V35.3A7.5 7.5 0 0 1 22.1 27.8H30.4A7.5 7.5 0 0 1 37.9 35.3V39.1z" fill="#5ec55e"></path></svg>
<svg style="position:absolute;left:79px;top:246px;" width="52" height="52" viewBox="0 0 52 52"><defs><mask id="m2"><rect width="52" height="52" fill="#fff"></rect><path d="M10.2 13.5L42 37.6" stroke="#000" stroke-width="4.6"></path></mask></defs><g mask="url(#m2)"><circle cx="25.9" cy="18.6" r="6.65" fill="#a6a6a6"></circle><path d="M14.6 39.1V35.3A7.5 7.5 0 0 1 22.1 27.8H30.4A7.5 7.5 0 0 1 37.9 35.3V39.1z" fill="#a6a6a6"></path></g><path d="M10.2 13.5L42 37.6" stroke="#a6a6a6" stroke-width="2" stroke-linecap="round"></path></svg>
<svg style="position:absolute;left:246px;top:177px;" width="52" height="52" viewBox="0 0 52 52"><circle cx="21.2" cy="19.1" r="6.6" fill="#5ec55e"></circle><path d="M9.8 38.9V36.3A8.5 8.5 0 0 1 18.3 27.8H24.299999999999997A8.5 8.5 0 0 1 32.8 36.3V38.9z" fill="#5ec55e"></path><path d="M30.8 24H42.7M36.6 17.9V29.5" stroke="#5ec55e" stroke-width="2.2"></path></svg>
<svg style="position:absolute;left:246px;top:246px;" width="52" height="52" viewBox="0 0 52 52"><circle cx="21.2" cy="19.1" r="6.6" fill="#fd5558"></circle><path d="M9.8 38.9V36.3A8.5 8.5 0 0 1 18.3 27.8H24.299999999999997A8.5 8.5 0 0 1 32.8 36.3V38.9z" fill="#fd5558"></path><path d="M32.2 24H42.3" stroke="#fd5558" stroke-width="2"></path></svg>
<svg style="position:absolute;left:1136px;top:148px;" width="32" height="32" viewBox="0 0 32 32"><rect x="9.1" y="8.9" width="14" height="9.7" fill="none" stroke="#2a84f0" stroke-width="2"></rect><path d="M6.25 21h7.2l1 1h3.1l1-1h7.45v1.6q0 1.4-1.4 1.4H7.65q-1.4 0-1.4-1.4z" fill="#2a84f0"></path></svg>
<svg style="position:absolute;left:1371px;top:153.8px;" width="20" height="20" viewBox="0 0 20 20"><circle cx="10" cy="7.6" r="2.3" fill="#2a84f0"></circle><path d="M5.6 14v-1q0-2.8 2.8-2.8h3.2q2.8 0 2.8 2.8v1z" fill="#2a84f0"></path></svg>
<svg style="position:absolute;left:1136px;top:186px;" width="32" height="32" viewBox="0 0 32 32"><rect x="11.8" y="8.8" width="8.2" height="14" rx="0.8" fill="none" stroke="#f4cc3f" stroke-width="1.8"></rect><rect x="14.9" y="20.6" width="2" height="0.9" fill="#f4cc3f"></rect></svg>
<svg style="position:absolute;left:1371px;top:191.8px;" width="20" height="20" viewBox="0 0 20 20"><circle cx="10" cy="7.6" r="2.3" fill="#2a84f0"></circle><path d="M5.6 14v-1q0-2.8 2.8-2.8h3.2q2.8 0 2.8 2.8v1z" fill="#2a84f0"></path></svg>
<svg style="position:absolute;left:1136px;top:224px;" width="32" height="32" viewBox="0 0 32 32"><rect x="10" y="7.7" width="11.9" height="16.7" rx="1.2" fill="#5ac85a"></rect><rect x="12.2" y="9.9" width="7.6" height="10.1" fill="#fff"></rect><ellipse cx="16" cy="15.1" rx="2.6" ry="3.3" fill="#8fd98f"></ellipse><rect x="14.8" y="22" width="2.4" height="0.9" fill="#fff"></rect></svg>
<svg style="position:absolute;left:1371px;top:229.8px;" width="20" height="20" viewBox="0 0 20 20"><circle cx="10" cy="7.6" r="2.3" fill="#2a84f0"></circle><path d="M5.6 14v-1q0-2.8 2.8-2.8h3.2q2.8 0 2.8 2.8v1z" fill="#2a84f0"></path></svg>
<svg style="position:absolute;left:1136px;top:262px;" width="32" height="32" viewBox="0 0 32 32"><rect x="8.2" y="18" width="15.9" height="5.2" rx="1" fill="none" stroke="#1ed3c3" stroke-width="1.8"></rect><path d="M18.3 14.4V18" stroke="#1ed3c3" stroke-width="1.6"></path><path d="M12.6 10.4a8.5 8.5 0 0 1 11 0" fill="none" stroke="#1ed3c3" stroke-width="1.7"></path><path d="M15.1 12.7a4.6 4.6 0 0 1 6.2 0" fill="none" stroke="#1ed3c3" stroke-width="1.7"></path><circle cx="11" cy="20.6" r="0.8" fill="#1ed3c3"></circle><circle cx="13.5" cy="20.6" r="0.8" fill="#1ed3c3"></circle></svg>
<svg style="position:absolute;left:1371px;top:267.8px;" width="20" height="20" viewBox="0 0 20 20"><circle cx="10" cy="7.6" r="2.3" fill="#2a84f0"></circle><path d="M5.6 14v-1q0-2.8 2.8-2.8h3.2q2.8 0 2.8 2.8v1z" fill="#2a84f0"></path></svg>
<svg style="position:absolute;left:84px;top:340px;" width="28" height="28" viewBox="0 0 28 28"><circle cx="13.5" cy="12.4" r="5.4" fill="none" stroke="#9a9a9a" stroke-width="2.3"></circle><path d="M17.6 16.6L21.6 20.6" stroke="#9a9a9a" stroke-width="2.6" stroke-linecap="round"></path></svg>
<svg style="position:absolute;left:494px;top:338px;" width="32" height="32" viewBox="0 0 32 32"><path d="M8.5 8.6H23.5L18.3 14V22.9L13.7 19.5V14z" fill="#fff"></path></svg>
<svg style="position:absolute;left:1339px;top:338px;" width="32" height="32" viewBox="0 0 32 32"><path d="M14.27 10.76 L14.52 8.74 L17.48 8.74 L17.73 10.76 L20.11 12.13 L21.98 11.34 L23.46 13.90 L21.84 15.13 L21.84 17.87 L23.46 19.10 L21.98 21.66 L20.11 20.87 L17.73 22.24 L17.48 24.26 L14.52 24.26 L14.27 22.24 L11.89 20.87 L10.02 21.66 L8.54 19.10 L10.16 17.87 L10.16 15.13 L8.54 13.90 L10.02 11.34 L11.89 12.13Z M19.00 16.50 A3.0 3.0 0 1 0 13.00 16.50 A3.0 3.0 0 1 0 19.00 16.50Z" fill="#fff" fill-rule="evenodd" stroke="#fff" stroke-width="0.6" stroke-linejoin="round"></path></svg>
<svg style="position:absolute;left:1379px;top:334px;" width="40" height="40" viewBox="0 0 40 40"><path d="M9 19.4H31M20 8.6V30.2" stroke="#fff" stroke-width="2.6"></path></svg>
<svg style="position:absolute;left:248px;top:395px;" width="16" height="14" viewBox="0 0 16 14"><path d="M3.2 10.5L8 5.7 12.8 10.5" fill="none" stroke="#555" stroke-width="2.3"></path></svg>
<svg style="position:absolute;left:1328px;top:436px;" width="54" height="24" viewBox="0 0 54 24"><path d="M12 4.2l2.3 4.8 5.2 0.7-3.8 3.6 0.9 5.2L12 16l-4.6 2.5 0.9-5.2-3.8-3.6 5.2-0.7z" fill="none" stroke="#2a84f0" stroke-width="1.5" stroke-linejoin="round"></path><path d="M36 6.8H48.5M39.6 6.8q0-2.6 2.6-2.6h0.6q2.6 0 2.6 2.6M37.4 6.8l0.8 11.4q0.1 0.7 0.8 0.7h7q0.7 0 0.8-0.7l0.8-11.4" fill="none" stroke="#2a84f0" stroke-width="1.5" stroke-linejoin="round"></path></svg>
<svg style="position:absolute;left:1328px;top:491px;" width="54" height="24" viewBox="0 0 54 24"><path d="M12 4.2l2.3 4.8 5.2 0.7-3.8 3.6 0.9 5.2L12 16l-4.6 2.5 0.9-5.2-3.8-3.6 5.2-0.7z" fill="none" stroke="#2a84f0" stroke-width="1.5" stroke-linejoin="round"></path><path d="M36 6.8H48.5M39.6 6.8q0-2.6 2.6-2.6h0.6q2.6 0 2.6 2.6M37.4 6.8l0.8 11.4q0.1 0.7 0.8 0.7h7q0.7 0 0.8-0.7l0.8-11.4" fill="none" stroke="#2a84f0" stroke-width="1.5" stroke-linejoin="round"></path></svg>
<svg style="position:absolute;left:1070px;top:486.5px;" width="30" height="30" viewBox="0 0 30 30"><rect x="7.3" y="8.2" width="15.4" height="10.9" rx="1.3" fill="none" stroke="#2a84f0" stroke-width="1.6"></rect><path d="M5.6 20.4h18.8v1q0 1.3-1.3 1.3H6.9q-1.3 0-1.3-1.3z" fill="none" stroke="#2a84f0" stroke-width="1.5" stroke-linejoin="round"></path></svg>
<svg style="position:absolute;left:1328px;top:546px;" width="54" height="24" viewBox="0 0 54 24"><path d="M12 4.2l2.3 4.8 5.2 0.7-3.8 3.6 0.9 5.2L12 16l-4.6 2.5 0.9-5.2-3.8-3.6 5.2-0.7z" fill="none" stroke="#2a84f0" stroke-width="1.5" stroke-linejoin="round"></path><path d="M36 6.8H48.5M39.6 6.8q0-2.6 2.6-2.6h0.6q2.6 0 2.6 2.6M37.4 6.8l0.8 11.4q0.1 0.7 0.8 0.7h7q0.7 0 0.8-0.7l0.8-11.4" fill="none" stroke="#2a84f0" stroke-width="1.5" stroke-linejoin="round"></path></svg>
<svg style="position:absolute;left:1328px;top:601px;" width="54" height="24" viewBox="0 0 54 24"><path d="M12 4.2l2.3 4.8 5.2 0.7-3.8 3.6 0.9 5.2L12 16l-4.6 2.5 0.9-5.2-3.8-3.6 5.2-0.7z" fill="none" stroke="#2a84f0" stroke-width="1.5" stroke-linejoin="round"></path><path d="M36 6.8H48.5M39.6 6.8q0-2.6 2.6-2.6h0.6q2.6 0 2.6 2.6M37.4 6.8l0.8 11.4q0.1 0.7 0.8 0.7h7q0.7 0 0.8-0.7l0.8-11.4" fill="none" stroke="#2a84f0" stroke-width="1.5" stroke-linejoin="round"></path></svg>
<svg style="position:absolute;left:1328px;top:656px;" width="54" height="24" viewBox="0 0 54 24"><path d="M12 4.2l2.3 4.8 5.2 0.7-3.8 3.6 0.9 5.2L12 16l-4.6 2.5 0.9-5.2-3.8-3.6 5.2-0.7z" fill="none" stroke="#2a84f0" stroke-width="1.5" stroke-linejoin="round"></path><path d="M36 6.8H48.5M39.6 6.8q0-2.6 2.6-2.6h0.6q2.6 0 2.6 2.6M37.4 6.8l0.8 11.4q0.1 0.7 0.8 0.7h7q0.7 0 0.8-0.7l0.8-11.4" fill="none" stroke="#2a84f0" stroke-width="1.5" stroke-linejoin="round"></path></svg>
<svg style="position:absolute;left:1070px;top:651.5px;" width="30" height="30" viewBox="0 0 30 30"><rect x="7.3" y="8.2" width="15.4" height="10.9" rx="1.3" fill="none" stroke="#2a84f0" stroke-width="1.6"></rect><path d="M5.6 20.4h18.8v1q0 1.3-1.3 1.3H6.9q-1.3 0-1.3-1.3z" fill="none" stroke="#2a84f0" stroke-width="1.5" stroke-linejoin="round"></path></svg>
<svg style="position:absolute;left:1328px;top:711px;" width="30" height="24" viewBox="0 0 30 24"><path d="M12 4.2l2.3 4.8 5.2 0.7-3.8 3.6 0.9 5.2L12 16l-4.6 2.5 0.9-5.2-3.8-3.6 5.2-0.7z" fill="none" stroke="#2a84f0" stroke-width="1.5" stroke-linejoin="round"></path></svg>
<svg style="position:absolute;left:1409px;top:421px;" width="10" height="10" viewBox="0 0 10 10"><path d="M2.2 6L5 2.1 7.8 6z" fill="#555" stroke="#555" stroke-width="0.6" stroke-linejoin="round"></path></svg>
<svg style="position:absolute;left:1409px;top:738px;z-index:9" width="10" height="10" viewBox="0 0 10 10"><path d="M2 3.5L5 6.8 8 3.5z" fill="#555"></path></svg>
<svg style="position:absolute;left:1363px;top:689px;z-index:9" width="60" height="60" viewBox="0 0 60 60"><path d="M18.5 29.5q0-3 3-3h17q3 0 3 3v10q0 3-3 3H24l-5.5 5.5z" fill="none" stroke="#fff" stroke-width="1.9"></path><path d="M23 23.5h17.5q2.7 0 2.7 2.7V38" fill="none" stroke="#fff" stroke-width="1.9"></path></svg></body></html>
